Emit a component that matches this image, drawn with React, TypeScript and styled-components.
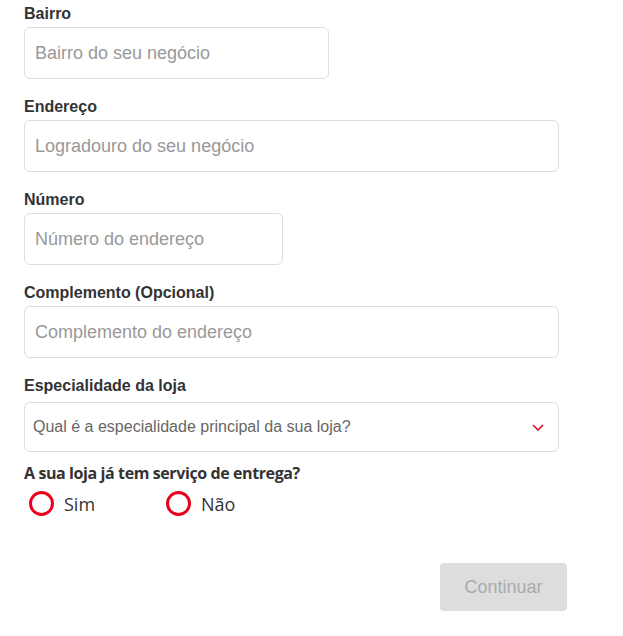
import React, { useState } from "react";
import styled, { createGlobalStyle } from "styled-components";

const GlobalStyle = createGlobalStyle`
  html, body {
    margin: 0;
    padding: 0;
    background: #fff;
  }
  body {
    font-family: "Liberation Sans", Arial, sans-serif;
  }
`;

const Form = styled.form`
  width: 623px;
  padding: 5px 0 0 24px;
  box-sizing: border-box;
`;

const Field = styled.div<{ width: number }>`
  display: flex;
  flex-direction: column;
  width: ${({ width }) => width}px;
  margin-bottom: 19px;
`;

const Label = styled.label<{ gap?: number }>`
  font-size: 16px;
  line-height: 18px;
  font-weight: 700;
  color: #333;
  margin-bottom: ${({ gap = 4 }) => gap}px;
`;

const Input = styled.input`
  height: 52px;
  box-sizing: border-box;
  border: 1px solid #ddd;
  border-radius: 6px;
  padding: 0 10px;
  font-family: "Liberation Sans", Arial, sans-serif;
  font-size: 18px;
  color: #333;
  outline: none;
  &::placeholder {
    color: #999;
  }
`;

const SelectBox = styled.div`
  height: 50px;
  box-sizing: border-box;
  border: 1px solid #ddd;
  border-radius: 6px;
  display: flex;
  align-items: center;
  justify-content: space-between;
  padding: 0 14px 0 8px;
  font-size: 16px;
  color: #666;
`;

const Question = styled.div`
  font-family: "Open Sans", "Noto Sans", sans-serif;
  font-weight: 700;
  font-size: 16px;
  line-height: 20px;
  letter-spacing: -0.4px;
  color: #333;
  margin-top: -8px;
`;

const RadioRow = styled.div`
  display: flex;
  margin-top: 8px;
  padding-left: 5px;
`;

const RadioOption = styled.label`
  display: flex;
  align-items: center;
  width: 137px;
  font-family: "Open Sans", "Noto Sans", sans-serif;
  font-size: 18px;
  color: #333;
  cursor: pointer;
`;

const Circle = styled.span<{ checked: boolean }>`
  width: 25px;
  height: 25px;
  box-sizing: border-box;
  border: 3px solid #e8001c;
  border-radius: 50%;
  margin-right: 10px;
  display: flex;
  align-items: center;
  justify-content: center;
  &::after {
    content: "";
    width: 11px;
    height: 11px;
    border-radius: 50%;
    background: ${({ checked }) => (checked ? "#e8001c" : "transparent")};
  }
`;

const Footer = styled.div`
  display: flex;
  justify-content: flex-end;
  width: 543px;
  margin-top: 47px;
`;

const Button = styled.button`
  width: 127px;
  height: 48px;
  border: none;
  border-radius: 4px;
  background: #ddd;
  color: #aaa;
  font-family: "Liberation Sans", Arial, sans-serif;
  font-size: 18px;
`;

const fields = [
  { label: "Bairro", placeholder: "Bairro do seu negócio", width: 305 },
  { label: "Endereço", placeholder: "Logradouro do seu negócio", width: 535 },
  { label: "Número", placeholder: "Número do endereço", width: 259 },
  {
    label: "Complemento (Opcional)",
    placeholder: "Complemento do endereço",
    width: 535,
  },
];

const App = () => {
  const [delivery, setDelivery] = useState<string | null>(null);

  return (
    <>
      <GlobalStyle />
      <Form onSubmit={(e) => e.preventDefault()}>
        {fields.map((f) => (
          <Field key={f.label} width={f.width}>
            <Label>{f.label}</Label>
            <Input placeholder={f.placeholder} />
          </Field>
        ))}
        <Field width={535}>
          <Label gap={7}>Especialidade da loja</Label>
          <SelectBox>
            <span>Qual é a especialidade principal da sua loja?</span>
            <svg width="12" height="7" viewBox="0 0 12 7">
              <path
                d="M1 1l5 5 5-5"
                fill="none"
                stroke="#e8001c"
                strokeWidth="1.5"
              />
            </svg>
          </SelectBox>
        </Field>
        <Question>A sua loja já tem serviço de entrega?</Question>
        <RadioRow>
          {["Sim", "Não"].map((opt) => (
            <RadioOption key={opt} onClick={() => setDelivery(opt)}>
              <Circle checked={delivery === opt} />
              {opt}
            </RadioOption>
          ))}
        </RadioRow>
        <Footer>
          <Button type="submit" disabled>
            Continuar
          </Button>
        </Footer>
      </Form>
    </>
  );
};

export default App;
